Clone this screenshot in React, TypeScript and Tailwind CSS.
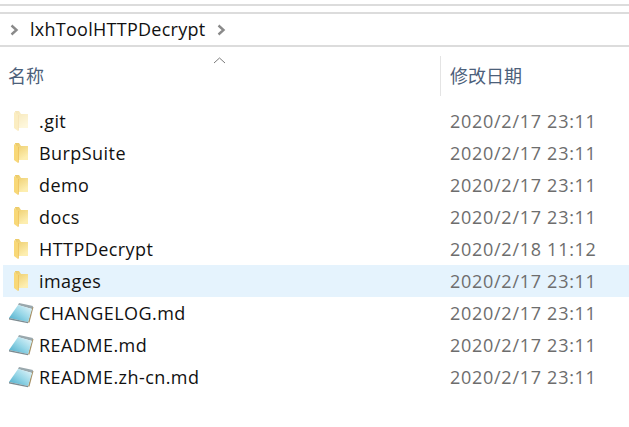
const rows = [
  { name: ".git", date: "2020/2/17 23:11", type: "hidden" },
  { name: "BurpSuite", date: "2020/2/17 23:11", type: "folder" },
  { name: "demo", date: "2020/2/17 23:11", type: "folder" },
  { name: "docs", date: "2020/2/17 23:11", type: "folder" },
  { name: "HTTPDecrypt", date: "2020/2/18 11:12", type: "folder" },
  { name: "images", date: "2020/2/17 23:11", type: "folder", selected: true },
  { name: "CHANGELOG.md", date: "2020/2/17 23:11", type: "note" },
  { name: "README.md", date: "2020/2/17 23:11", type: "note" },
  { name: "README.zh-cn.md", date: "2020/2/17 23:11", type: "note" },
];

function FolderIcon({ faded, id }: { faded?: boolean; id: string }) {
  return (
    <svg width="14" height="20" viewBox="0 0 14 20" className={faded ? "opacity-45" : ""}>
      <defs>
        <linearGradient id={id} x1="0" y1="0" x2="0.5" y2="1">
          <stop offset="0" stopColor="#ebc862" />
          <stop offset="1" stopColor="#fdeeb0" />
        </linearGradient>
      </defs>
      <path d="M1 0h4l2 3h7v14H4z" fill={`url(#${id})`} />
      <path d="M0 1l4 3v16l-4-3z" fill="#f8d877" />
      <path d="M4 4v16l.8-.8V4z" fill="#eec05a" />
    </svg>
  );
}

function NoteIcon({ id }: { id: string }) {
  return (
    <svg width="25" height="21" viewBox="0 0 25 21">
      <defs>
        <linearGradient id={id} x1="0" y1="1" x2="1" y2="0">
          <stop offset="0" stopColor="#46a9c8" />
          <stop offset="0.5" stopColor="#96d6e7" />
          <stop offset="1" stopColor="#e8f7fb" />
        </linearGradient>
      </defs>
      <path d="M23 4h1.5l-4 15.5H19z" fill="#a8936a" />
      <path d="M9 2l1-2 14 3-1 3z" fill="#9aa8ad" />
      <path d="M0 15L9 2l14 4-4 13z" fill={`url(#${id})`} />
      <path d="M0 15l19 4v1.2L0 16.5z" fill="#7c8b91" />
    </svg>
  );
}

function Chevron({ className }: { className?: string }) {
  return (
    <svg width="9" height="12" viewBox="0 0 9 12" className={className}>
      <path d="M1.5 1.5L6.5 6l-5 4.5" fill="none" stroke="#8a8a8a" strokeWidth="2.4" />
    </svg>
  );
}

export default function App() {
  return (
    <div className="h-[427px] w-[629px] overflow-hidden bg-white font-['Open_Sans','Noto_Sans_CJK_SC',sans-serif] text-[18px]">
      <div className="h-[14px] pt-1">
        <div className="h-[10px] border-y-2 border-[#dcdcdc]" />
      </div>

      {/* Breadcrumb */}
      <div className="flex h-[33px] items-center border-b-2 border-[#dcdcdc] pl-[10px] text-[#111]">
        <Chevron />
        <span className="ml-[11px] tracking-[0.27px]">lxhToolHTTPDecrypt</span>
        <Chevron className="ml-[11px]" />
      </div>

      {/* Column headers */}
      <div className="relative flex h-[58px] items-center text-[#4c607a]">
        <svg width="13" height="7" viewBox="0 0 13 7" className="absolute left-[213px] top-[10px]">
          <path d="M1 6l5.5-5L12 6" fill="none" stroke="#7a7a7a" strokeWidth="1" />
        </svg>
        <div className="w-[440px] pl-2">名称</div>
        <div className="flex h-10 items-center border-l border-[#e4e4e4] pl-[9px]">修改日期</div>
      </div>

      {/* File list */}
      <div className="ml-[3px]">
        {rows.map((row) => (
          <div key={row.name} className={`flex h-[32px] items-center ${row.selected ? "bg-[#e5f3fd]" : ""}`}>
            <div className="flex w-[36px] shrink-0 justify-center">
              {row.type === "note" ? <NoteIcon id={`n-${row.name}`} /> : <FolderIcon id={`f-${row.name}`} faded={row.type === "hidden"} />}
            </div>
            <div className="w-[411px] tracking-[0.44px] text-[#111]">{row.name}</div>
            <div className="tracking-[0.72px] text-[#6d6d6d]">{row.date}</div>
          </div>
        ))}
      </div>
    </div>
  );
}
